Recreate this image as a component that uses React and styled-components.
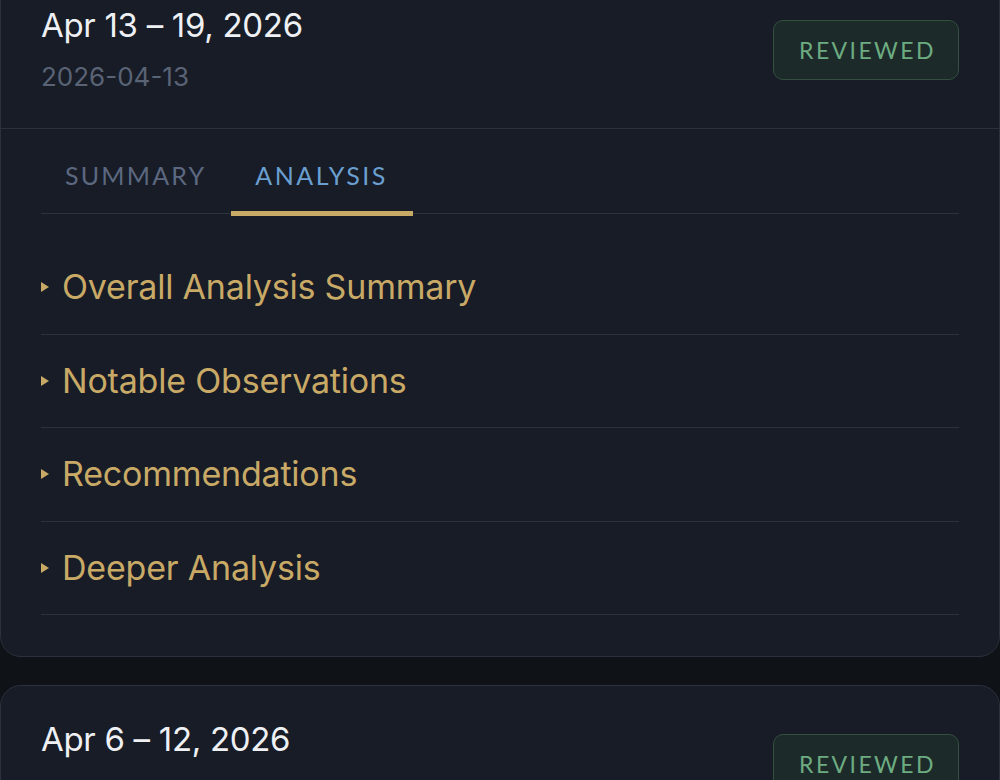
import React, { useState } from "react";
import styled, { createGlobalStyle, css } from "styled-components";

const GlobalStyle = createGlobalStyle`
  html, body {
    margin: 0;
    padding: 0;
    background: #0f1216;
  }
  * { box-sizing: border-box; }
`;

const Page = styled.div`
  display: flex;
  flex-direction: column;
  gap: 28px;
  margin-top: -29px;
  font-family: Inter, "Noto Sans", sans-serif;
`;

const Card = styled.section`
  background: #171c27;
  border: 1.5px solid #2b313d;
  border-radius: 21px;
  overflow: hidden;
`;

const CardHeader = styled.header`
  display: flex;
  justify-content: space-between;
  align-items: flex-start;
  padding: 33px 40px 36px;
  border-bottom: 1.5px solid #2b313d;
`;

const HeaderText = styled.div`
  display: flex;
  flex-direction: column;
  gap: 17px;
`;

const Title = styled.h2`
  margin: 0;
  font-family: Inter, sans-serif;
  font-weight: 400;
  font-size: 33px;
  line-height: 40px;
  letter-spacing: -0.3px;
  color: #eef0f4;
`;

const DateLabel = styled.div`
  font-family: Inter, sans-serif;
  font-size: 26px;
  line-height: 30px;
  color: #5a6375;
`;

const Badge = styled.span`
  display: inline-flex;
  align-items: center;
  justify-content: center;
  margin-top: 15px;
  width: 186px;
  height: 60px;
  border: 1.5px solid #34503f;
  border-radius: 10px;
  background: #1c2a2a;
  color: #6dac81;
  font-family: Lato, sans-serif;
  font-size: 23px;
  letter-spacing: 2.4px;
  padding-left: 3px;
`;

const CardBody = styled.div`
  padding: 0 40px 41px;
`;

const Tabs = styled.div`
  display: flex;
  border-bottom: 1.5px solid #2b313d;
`;

const Tab = styled.button`
  position: relative;
  background: none;
  border: none;
  cursor: pointer;
  padding: 31px 25px 23px 24px;
  font-family: Lato, sans-serif;
  font-size: 25px;
  line-height: 30px;
  letter-spacing: 2.2px;
  color: #5c6880;
  ${(p) =>
    p.$active &&
    css`
      color: #6a9fd0;
      padding: 31px 25px 23px 24px;
      letter-spacing: 2.5px;
      &::after {
        content: "";
        position: absolute;
        left: 0;
        right: 0;
        bottom: -3px;
        height: 5px;
        background: #c8a965;
      }
    `}
`;

const AccordionList = styled.div`
  display: flex;
  flex-direction: column;
  padding-top: 27px;
`;

const AccordionItem = styled.div`
  display: flex;
  align-items: center;
  gap: 13px;
  height: 93.5px;
  border-bottom: 1.5px solid #2b313d;
  cursor: pointer;
`;

const Caret = styled.svg`
  width: 8px;
  height: 10px;
  flex: none;
  fill: #c8a965;
`;

const ItemLabel = styled.span`
  font-family: Inter, sans-serif;
  font-size: 34px;
  line-height: 40px;
  color: #c9a966;
  letter-spacing: -0.2px;
`;

const sections = [
  "Overall Analysis Summary",
  "Notable Observations",
  "Recommendations",
  "Deeper Analysis",
];

function WeekCard({ title, date }) {
  const [tab, setTab] = useState("analysis");
  return (
    <Card>
      <CardHeader>
        <HeaderText>
          <Title>{title}</Title>
          <DateLabel>{date}</DateLabel>
        </HeaderText>
        <Badge>REVIEWED</Badge>
      </CardHeader>
      <CardBody>
        <Tabs>
          <Tab $active={tab === "summary"} onClick={() => setTab("summary")}>
            SUMMARY
          </Tab>
          <Tab $active={tab === "analysis"} onClick={() => setTab("analysis")}>
            ANALYSIS
          </Tab>
        </Tabs>
        <AccordionList>
          {sections.map((s) => (
            <AccordionItem key={s}>
              <Caret viewBox="0 0 8 10">
                <path d="M0 0 L8 5 L0 10 Z" />
              </Caret>
              <ItemLabel>{s}</ItemLabel>
            </AccordionItem>
          ))}
        </AccordionList>
      </CardBody>
    </Card>
  );
}

export default function App() {
  return (
    <>
      <GlobalStyle />
      <Page>
        <WeekCard title="Apr 13 – 19, 2026" date="2026-04-13" />
        <WeekCard title="Apr 6 – 12, 2026" date="2026-04-06" />
      </Page>
    </>
  );
}
